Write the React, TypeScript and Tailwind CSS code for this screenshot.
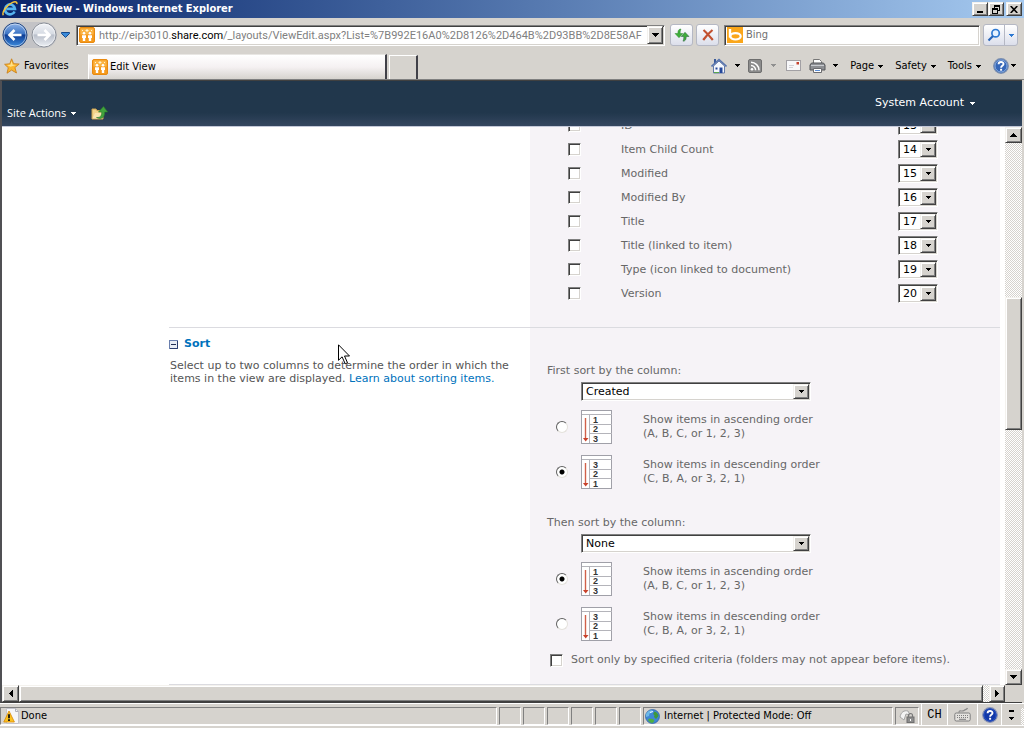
import React from "react";

const RAISED =
  "border border-t-[#f4f2ee] border-l-[#f4f2ee] border-r-[#404040] border-b-[#404040] bg-[#d6d3ce] shadow-[inset_1px_1px_0_#ffffff,inset_-1px_-1px_0_#808080]";
const SUNKEN =
  "border border-t-[#808080] border-l-[#808080] border-r-white border-b-white bg-white shadow-[inset_1px_1px_0_#404040,inset_-1px_-1px_0_#d6d3ce]";
const PANE = "border-t border-l border-t-[#808080] border-l-[#808080] border-r border-r-white border-b border-b-white";
const TRACK = "bg-[repeating-conic-gradient(#ffffff_0_25%,#d6d3ce_0_50%)] bg-[length:2px_2px]";

function Caret({ className = "" }: { className?: string }) {
  return (
    <svg viewBox="0 0 5 3" width="5" height="3" className={"shrink-0 " + className} shapeRendering="crispEdges" aria-hidden="true">
      <path d="M0 0h5v1H4v1H3v1H2V2H1V1H0z" fill="currentColor" />
    </svg>
  );
}

function BigTriangle({ dir }: { dir: "up" | "down" | "left" | "right" }) {
  const paths = {
    up: "M3 0h1v1h1v1h1v1h1v1H0V3h1V2h1V1h1z",
    down: "M0 0h7v1H6v1H5v1H4v1H3V3H2V2H1V1H0z",
    left: "M4 0v7H3V6H2V5H1V4H0V3h1V2h1V1h1V0z",
    right: "M0 0v7h1V6h1V5h1V4h1V3H3V2H2V1H1V0z",
  };
  const flat = dir === "up" || dir === "down";
  return (
    <svg width={flat ? 7 : 4} height={flat ? 4 : 7} viewBox={flat ? "0 0 7 4" : "0 0 4 7"} shapeRendering="crispEdges" aria-hidden="true">
      <path d={paths[dir]} fill="#000" />
    </svg>
  );
}

function IeLogo() {
  return (
    <svg width="16" height="16" viewBox="0 0 16 16" aria-hidden="true">
      <path d="M12.6 10.4A5 5 0 1 1 13 7.9H4.6" fill="none" stroke="#55b4f0" strokeWidth="2.6" />
      <path d="M1.4 14.2C-.6 11.6 4.6 3.8 10.6 1.4c3-1.2 4.6-.4 4.2 1.6" fill="none" stroke="#f5c33b" strokeWidth="1.5" />
    </svg>
  );
}

function SharePointIcon() {
  return (
    <svg width="16" height="16" viewBox="0 0 16 16" className="shrink-0" aria-hidden="true">
      <rect x=".5" y=".5" width="15" height="15" rx="1.5" fill="#f59a1c" stroke="#e88a10" />
      <rect x="1.5" y="1.5" width="13" height="6" fill="#fbb444" />
      <circle cx="5" cy="6.300" r="1.300" fill="#fff" />
      <circle cx="11" cy="6.300" r="1.300" fill="#fff" />
      <path d="M3 8.300h4V11H6.200v3H3.800v-3H3zM9 8.300h4V11h-.8v3H9.800v-3H9z" fill="#fff" />
      <path d="M8 2v3M6.500 3.500h3M3 3.500h1M12 3.500h1" stroke="#fff3d0" strokeWidth="1" />
    </svg>
  );
}

function NavArrow({ forward = false }: { forward?: boolean }) {
  const id = forward ? "fwd" : "back";
  return (
    <svg width="26" height="26" viewBox="0 0 26 26" aria-hidden="true">
      <defs>
        <linearGradient id={id} x1="0" y1="0" x2="0" y2="1">
          <stop offset="0" stopColor={forward ? "#f3f5f9" : "#8fb4e8"} />
          <stop offset=".45" stopColor={forward ? "#d6dbe3" : "#3c74c4"} />
          <stop offset=".5" stopColor={forward ? "#b9bfca" : "#0d3c94"} />
          <stop offset="1" stopColor={forward ? "#eef1f6" : "#3f8fe0"} />
        </linearGradient>
      </defs>
      <circle cx="13" cy="13" r="12" fill={`url(#${id})`} stroke={forward ? "#8a8f98" : "#24477f"} />
      <circle cx="13" cy="13" r="11" fill="none" stroke="#ffffff" strokeOpacity=".5" />
      <path
        d={forward ? "M6.5 13h12M13.5 8l5 5-5 5" : "M19.5 13h-12M12.5 8l-5 5 5 5"}
        fill="none"
        stroke="#fff"
        strokeWidth="2.6"
      />
    </svg>
  );
}

function StarIcon() {
  return (
    <svg width="16" height="16" viewBox="0 0 16 16" aria-hidden="true">
      <path d="M7.6.8l2 4.9 5.6.3-4.3 3.6 1.6 5.4-4.9-2.9-4.6 3.1 1.3-5.5L.6 6.3l5.2-.5z" fill="#fbb62c" stroke="#c98220" strokeWidth=".9" />
      <path d="M7.5 3l1.2 3.7 3.4.3-5.6 1.8-3.5-1.7 3.4-.4z" fill="#ffe28a" />
    </svg>
  );
}

function RefreshIcon() {
  return (
    <svg width="16" height="14" viewBox="0 0 16 14" aria-hidden="true">
      <path d="M7 1C4.500 1 3.800 3 3.900 5.500H1l4 4.200 3.800-4.200H6.200C6.100 3.500 6.300 2.300 7 1z" fill="#3fae3b" stroke="#2b8a2d" strokeWidth=".5" />
      <path d="M9 13.200c2.600 0 3.300-2 3.200-4.700H15l-4-4.200-3.800 4.200h2.600c.1 2-.1 3.300-.8 4.700z" fill="#3fae3b" stroke="#24573a" strokeWidth=".5" />
    </svg>
  );
}

function StopIcon() {
  return (
    <svg width="14" height="14" viewBox="0 0 14 14" aria-hidden="true">
      <path d="M2.500 2C5 4 8 7.500 11.800 12M11.500 2C8.500 4.500 5 8 2.200 12" fill="none" stroke="#c2502f" strokeWidth="2.200" />
    </svg>
  );
}

function BingIcon() {
  return (
    <svg width="16" height="16" viewBox="0 0 16 16" className="shrink-0" aria-hidden="true">
      <rect width="16" height="16" fill="#faa61a" />
      <path d="M3 2v8.500" stroke="#fff" strokeWidth="2.400" />
      <ellipse cx="8.500" cy="9.300" rx="5.200" ry="3.200" fill="none" stroke="#fff" strokeWidth="2.200" />
    </svg>
  );
}

function SearchIcon() {
  return (
    <svg width="14" height="14" viewBox="0 0 14 14" aria-hidden="true">
      <circle cx="8.600" cy="5.200" r="3.700" fill="#e6f2ff" stroke="#2d79d2" strokeWidth="1.700" />
      <path d="M6 8L1.500 12.500" stroke="#2563b8" strokeWidth="2.200" />
    </svg>
  );
}

function HomeIcon() {
  return (
    <svg width="16" height="16" viewBox="0 0 16 16" aria-hidden="true">
      <path d="M3 1h2v4H3z" fill="#3a5a9a" />
      <path d="M2.500 8v7h11V8L8 3z" fill="#f5f8fd" stroke="#6379a8" />
      <path d="M.5 8.500L8 1.500l7.500 7" fill="none" stroke="#5673ad" strokeWidth="1.600" />
      <path d="M8.500 9.500h3V15h-3z" fill="#24479a" />
      <path d="M4.500 9.500h2v2h-2z" fill="#24479a" />
      <path d="M3 14.500h5" stroke="#58a84a" />
    </svg>
  );
}

function RssIcon() {
  return (
    <svg width="14" height="14" viewBox="0 0 14 14" aria-hidden="true">
      <rect x=".5" y=".5" width="13" height="13" rx="1.500" fill="#8c8c8c" stroke="#6e6e6e" />
      <circle cx="4" cy="10.200" r="1.300" fill="#fff" />
      <path d="M3 6.500a4.600 4.600 0 0 1 4.600 4.800M3 3.300a8 8 0 0 1 8 8" fill="none" stroke="#fff" strokeWidth="1.500" />
    </svg>
  );
}

function MailIcon() {
  return (
    <svg width="15" height="11" viewBox="0 0 15 11" aria-hidden="true">
      <rect x=".5" y=".5" width="14" height="10" fill="#f7f7f9" stroke="#a2a0a4" />
      <path d="M10.500 2h2.500v2.500h-2.500z" fill="#c5412d" />
      <path d="M3 5.500h5M3 7.500h4" stroke="#d0d0d6" />
    </svg>
  );
}

function PrinterIcon() {
  return (
    <svg width="17" height="16" viewBox="0 0 17 16" aria-hidden="true">
      <path d="M4.500 5V1.500h6l2 2V5" fill="#fff" stroke="#777" />
      <path d="M2.500 5h12l1.500 2v5H1V7z" fill="#8d8f93" stroke="#55575b" />
      <path d="M2 7.500h13" stroke="#c9cbd0" />
      <path d="M4.500 10.500h8v4h-8z" fill="#fff" stroke="#6c6c70" />
      <path d="M6 12.500h5" stroke="#5c8fd6" />
    </svg>
  );
}

function HelpIcon({ dark = false }: { dark?: boolean }) {
  return (
    <svg width="16" height="16" viewBox="0 0 16 16" aria-hidden="true">
      <circle cx="8" cy="8" r="7.300" fill={dark ? "#1238a8" : "#3667b8"} stroke={dark ? "#8a94b4" : "#7c8faf"} strokeWidth="1.200" />
      <circle cx="8" cy="8" r="6" fill="none" stroke={dark ? "#2a55c8" : "#9cbbe6"} strokeWidth=".8" />
      <path d="M5.600 6.300c0-3 4.900-2.900 4.900-.2 0 1.700-2.400 1.800-2.400 3.600" fill="none" stroke="#fff" strokeWidth="1.900" />
      <rect x="7.100" y="10.800" width="2" height="1.900" fill="#fff" />
    </svg>
  );
}

function FolderUpIcon() {
  return (
    <svg width="17" height="16" viewBox="0 0 17 16" aria-hidden="true">
      <path d="M1 4h4l1 1.500h6V14H1z" fill="#f4d48b" stroke="#caa14e" />
      <path d="M1.500 13.500L4 8h9l-2 5.500z" fill="#fbe5b0" />
      <path d="M5.500 12.500c4 .3 5.200-1.700 5.200-5.500H7.500l5-5.500 4.200 5.500h-3c0 5.500-3 8-8.200 5.500z" fill="#41a33c" stroke="#2a7a2c" strokeWidth=".6" />
    </svg>
  );
}

function WarningPage() {
  return (
    <svg width="16" height="16" viewBox="0 0 16 16" aria-hidden="true">
      <path d="M3.500.5h9l3 3v12h-12z" fill="#f6f6f8" stroke="#c4c4cc" />
      <path d="M12.500.5v3h3" fill="none" stroke="#b0b0b8" />
      <path d="M6 3L.8 14h10.600z" fill="#fcc21f" stroke="#dd9010" strokeWidth=".9" />
      <path d="M6 6.300v4" stroke="#111" strokeWidth="1.800" />
      <path d="M5.100 11.300h1.800V13H5.100z" fill="#111" />
    </svg>
  );
}

function GlobeIcon() {
  return (
    <svg width="15" height="15" viewBox="0 0 15 15" aria-hidden="true">
      <circle cx="7.500" cy="7.500" r="7" fill="#3f86d6" stroke="#2a5e9e" strokeWidth=".7" />
      <path d="M1 5c2-3.500 4-4 6.500-3.800L6 4 4.500 4.500 4 7 1 8z" fill="#6cb9e8" />
      <path d="M9.500 2.500c2 .3 3.500 2 4 4.500l-2.500 3-2-2 .5-2-1.500-1z" fill="#3f9a3a" />
      <path d="M4 9.500l4 .5 1.500 2-2 2C5.500 14 3.500 12.500 3 11z" fill="#4eb043" />
      <path d="M5 3.500l3-1" stroke="#eefaff" strokeWidth="1.300" />
    </svg>
  );
}

function LockIcon() {
  return (
    <svg width="16" height="14" viewBox="0 0 16 14" aria-hidden="true">
      <path d="M1 8c1-5 4-7 8-6l2 4-4-1-2 6z" fill="#f3f3f3" stroke="#a5a5a5" />
      <rect x="8" y="8" width="7" height="5.500" fill="#8d8d8d" stroke="#6f6f6f" />
      <path d="M9.500 8V6.500a2 2 0 0 1 4 0V8" fill="none" stroke="#777" strokeWidth="1.200" />
      <path d="M11.500 10v2" stroke="#fff" />
    </svg>
  );
}

function KeyboardIcon() {
  return (
    <svg width="17" height="15" viewBox="0 0 17 15" aria-hidden="true">
      <path d="M5 5.500c0-3 3-.5 5-2s3-1 3.500-2.500" fill="none" stroke="#8a8a8a" strokeWidth="1.200" />
      <rect x=".8" y="6" width="15.400" height="8" rx="1.500" fill="#e4e2de" stroke="#7e7e7e" />
      <path d="M3 8.500h11M3 10.500h11" stroke="#7e7e7e" strokeDasharray="1 1" />
      <path d="M5 12.300h7" stroke="#7e7e7e" />
    </svg>
  );
}

function SortGlyph({ digits }: { digits: string[] }) {
  return (
    <svg width="32" height="34" viewBox="0 0 32 34" className="shrink-0" aria-hidden="true">
      <rect x=".5" y=".5" width="30" height="33" fill="#fff" stroke="#a0a0a8" />
      <path d="M1 4.500h30M8.500 5v28M9 14.500h22M9 23.500h22" stroke="#b4b4ba" fill="none" />
      <path d="M4.500 8v22" stroke="#d0604a" strokeWidth="1.400" />
      <path d="M2 28h5.500L4.700 31.500z" fill="#c8402a" />
      {digits.map((d, i) => (
        <text key={i} x="12" y={[13, 22, 32][i]} className="font-['Liberation_Sans',sans-serif] text-[9px] font-bold" fill="#333">
          {d}
        </text>
      ))}
    </svg>
  );
}

function ClassicSelect({ label, value, options, className }: { label: string; value: string; options: string[]; className: string }) {
  return (
    <span className={"relative flex h-[19px] " + SUNKEN + " " + className}>
      <select aria-label={label} defaultValue={value} className="w-full appearance-none bg-transparent pl-1 text-[11px] leading-[17px] text-black outline-none">
        {options.map((o) => (
          <option key={o}>{o}</option>
        ))}
      </select>
      <span className={"pointer-events-none absolute top-px right-px bottom-px flex w-4 items-center justify-center text-black " + RAISED}>
        <Caret />
      </span>
    </span>
  );
}

const CHECKBOX = "size-[13px] shrink-0 appearance-none rounded-none " + SUNKEN;
const RADIO =
  "size-3 shrink-0 appearance-none rounded-full border border-t-[#606060] border-l-[#606060] border-r-[#e4e1dc] border-b-[#e4e1dc] bg-white checked:bg-[radial-gradient(circle,#000_0_2px,#fff_3px)]";

const fields = [
  { name: "ID", pos: "13" },
  { name: "Item Child Count", pos: "14" },
  { name: "Modified", pos: "15" },
  { name: "Modified By", pos: "16" },
  { name: "Title", pos: "17" },
  { name: "Title (linked to item)", pos: "18" },
  { name: "Type (icon linked to document)", pos: "19" },
  { name: "Version", pos: "20" },
];
const positions = Array.from({ length: 20 }, (_, i) => String(i + 1));

function SortOption({ group, descending, checked }: { group: string; descending: boolean; checked: boolean }) {
  const digits = descending ? ["3", "2", "1"] : ["1", "2", "3"];
  return (
    <label className="flex items-center">
      <input type="radio" name={group} defaultChecked={checked} className={RADIO} />
      <span className="ml-[13px] flex">
        <SortGlyph digits={digits} />
      </span>
      <span className="ml-[30px] leading-[14px]">
        Show items in {descending ? "descending" : "ascending"} order
        <br />
        {descending ? "(C, B, A, or 3, 2, 1)" : "(A, B, C, or 1, 2, 3)"}
      </span>
    </label>
  );
}

function SortBlock({ title, value, group, descending }: { title: string; value: string; group: string; descending: boolean }) {
  return (
    <fieldset>
      <legend className="leading-[14px]">{title}</legend>
      <ClassicSelect label={title} value={value} options={["None", "Created", "Modified", "Title"]} className="mt-1 ml-[34px] w-[230px]" />
      <div className="mt-[9px] ml-[9px] flex flex-col gap-[11px]">
        <SortOption group={group} descending={false} checked={!descending} />
        <SortOption group={group} descending={true} checked={descending} />
      </div>
    </fieldset>
  );
}

function TitleBar() {
  return (
    <div className="flex h-[18px] items-center bg-linear-to-r from-[#0a246a] to-[#a6caf0] pr-[2px] pl-[2px]">
      <IeLogo />
      <h1 className="ml-[2px] flex-1 text-[11px] leading-[18px] font-bold whitespace-nowrap text-white">Edit View - Windows Internet Explorer</h1>
      <button aria-label="Minimize" className={"flex h-[14px] w-4 items-center justify-center " + RAISED}>
        <svg width="9" height="8" viewBox="0 0 9 8" shapeRendering="crispEdges">
          <path d="M1 6h6v2H1z" />
        </svg>
      </button>
      <button aria-label="Restore" className={"flex h-[14px] w-4 items-center justify-center " + RAISED}>
        <svg width="9" height="9" viewBox="0 0 9 9" shapeRendering="crispEdges">
          <path d="M2 0h6v6H6V5h1V2H3v1H2zM0 3h6v6H0zM1 5v3h4V5z" fillRule="evenodd" />
        </svg>
      </button>
      <button aria-label="Close" className={"ml-[2px] flex h-[14px] w-4 items-center justify-center " + RAISED}>
        <svg width="8" height="7" viewBox="0 0 8 7">
          <path d="M.7 0l6.600 7M7.300 0L.7 7" stroke="#000" strokeWidth="1.600" />
        </svg>
      </button>
    </div>
  );
}

const TOOL_BUTTON = "flex h-[22px] items-center justify-center rounded-[3px] border border-[#b5b8c4] bg-linear-to-b from-white to-[#dcdfeb]";

function AddressBar() {
  return (
    <div className="flex h-[34px] items-center pr-[6px] pl-[2px]">
      <div className="flex w-[55px] shrink-0 items-center justify-between rounded-full bg-[#c3c3c6]">
        <button aria-label="Back" className="flex"><NavArrow /></button>
        <button aria-label="Forward" className="flex"><NavArrow forward /></button>
      </div>
      <button aria-label="Recent pages" className="mr-[6px] ml-1 flex shrink-0">
        <svg width="9" height="6" viewBox="0 0 9 6">
          <path d="M.5.500h8v1L4.500 5.500.5 1.500z" fill="#3a8ad8" stroke="#174a8c" />
        </svg>
      </button>
      <div className={"flex h-[21px] min-w-0 flex-1 items-center pr-px pl-[2px] " + SUNKEN}>
        <SharePointIcon />
        <div className="relative ml-1 min-w-0 flex-1 overflow-hidden pt-px font-['Roboto',sans-serif] text-[11px] leading-4 whitespace-nowrap text-[#808080]">
          <span aria-hidden="true">
            http://eip3010.<span className="text-black">share.com</span>/_layouts/ViewEdit.aspx?List=%7B992E16A0%2D8126%2D464B%2D93BB%2D8E58AF
          </span>
          <input aria-label="Address" className="absolute inset-0 w-full bg-transparent text-transparent outline-none" />
        </div>
        <button aria-label="Show addresses" className={"flex h-[18px] w-4 shrink-0 items-center justify-center " + RAISED}>
          <BigTriangle dir="down" />
        </button>
      </div>
      <button aria-label="Refresh" className={"ml-[5px] w-[23px] " + TOOL_BUTTON}><RefreshIcon /></button>
      <button aria-label="Stop" className={"mr-[5px] ml-[3px] w-[23px] " + TOOL_BUTTON}><StopIcon /></button>
      <div className={"flex h-[21px] w-[256px] shrink-0 items-center pl-[2px] " + SUNKEN}>
        <BingIcon />
        <input aria-label="Search" defaultValue="Bing" className="ml-[3px] min-w-0 flex-1 pt-px text-[11px] text-[#707070] outline-none" />
      </div>
      <div className={"ml-[3px] w-[35px] shrink-0 " + TOOL_BUTTON}>
        <button aria-label="Search the web" className="flex h-full w-[21px] items-center justify-center border-r border-[#b5b8c4]"><SearchIcon /></button>
        <button aria-label="Search options" className="flex flex-1 justify-center text-[#2d79d2]"><Caret /></button>
      </div>
    </div>
  );
}

function TabRow() {
  return (
    <div className="flex h-7 items-end justify-between border-b border-[#808080]">
      <button className="flex h-[27px] w-[88px] shrink-0 items-center pl-1 text-[11px]">
        <StarIcon />
        <span className="ml-1 pt-px">Favorites</span>
      </button>
      <button className="flex h-[25px] w-[299px] items-center border-t border-r-2 border-l border-t-[#e8e6e3] border-r-[#404048] border-l-white bg-linear-to-b from-white via-[#f5f1f2] to-[#d6d3ce] pl-[3px] text-[11px]">
        <SharePointIcon />
        <span className="ml-[2px] pt-px">Edit View</span>
      </button>
      <button aria-label="New tab" className="ml-[2px] h-6 w-[29px] border-t border-r-2 border-l border-t-white border-r-[#404048] border-l-white" />
      <div className="ml-auto flex h-[27px] items-center pr-[8px] text-[11px] whitespace-nowrap">
        <button aria-label="Home" className="flex items-center gap-2"><HomeIcon /><Caret /></button>
        <button aria-label="Feeds" className="ml-2 flex items-center gap-[9px] text-[#909090]"><RssIcon /><Caret /></button>
        <button aria-label="Read mail" className="ml-[10px] flex"><MailIcon /></button>
        <button aria-label="Print" className="ml-2 flex items-center gap-[7px]"><PrinterIcon /><Caret /></button>
        <button className="ml-3 flex items-center gap-1 pt-px">Page<Caret /></button>
        <button className="ml-3 flex items-center gap-1 pt-px">Safety<Caret /></button>
        <button className="ml-3 flex items-center gap-1 pt-px">Tools<Caret /></button>
        <button aria-label="Help" className="ml-3 flex items-center gap-[2px]"><HelpIcon /><Caret /></button>
      </div>
    </div>
  );
}

function RibbonHeader() {
  return (
    <header className="flex h-[46px] items-start justify-between border-b border-[#c3c8d8] bg-linear-to-b from-[#21374c] from-70% to-[#34465f] pr-[47px] pl-[5px] text-white">
      <div className="mt-6 flex items-center font-['Open_Sans',sans-serif] text-[11px] leading-4">
        <button className="flex items-center gap-[5px]">Site Actions<Caret /></button>
        <button aria-label="Navigate up" className="ml-[15px] flex"><FolderUpIcon /></button>
      </div>
      <button className="mt-[14px] flex items-center gap-[6px] font-['DejaVu_Sans',sans-serif] text-[11px] leading-4">
        System Account<Caret />
      </button>
    </header>
  );
}

function Document() {
  return (
    <main className="min-h-0 min-w-0 flex-1 overflow-hidden bg-white pr-[5px] pl-[167px] font-['DejaVu_Sans',sans-serif] text-[11px] text-[#676767]">
      <section className="flex border-b border-[#dbdbe0]">
        <div className="w-[361px] shrink-0" />
        <div className="min-w-0 flex-1 bg-[#f6f3f7] pb-[22px]">
          <table className="-mt-[14px] border-collapse">
            <tbody>
              {fields.map((f) => (
                <tr key={f.name} className="h-6">
                  <td className="w-[91px] p-0 pl-[38px]">
                    <input type="checkbox" id={"show-" + f.pos} className={"block " + CHECKBOX} />
                  </td>
                  <td className="w-[277px] p-0 pt-[3px]">
                    <label htmlFor={"show-" + f.pos}>{f.name}</label>
                  </td>
                  <td className="p-0">
                    <ClassicSelect label={"Position of " + f.name} value={f.pos} options={positions} className="w-10" />
                  </td>
                </tr>
              ))}
            </tbody>
          </table>
        </div>
      </section>
      <section className="flex border-b border-[#dbdbe0]">
        <div className="w-[361px] shrink-0 pt-[9px]">
          <h2 className="flex items-center text-[11px] leading-[14px] font-bold text-[#0072bc]">
            <svg width="9" height="9" viewBox="0 0 9 9" className="mr-[6px]" aria-hidden="true">
              <rect x=".5" y=".5" width="8" height="8" fill="#e9edf5" stroke="#6a7fae" />
              <path d="M8.500 1v7.500H1" fill="none" stroke="#2b3d6e" />
              <path d="M2 4.500h5" stroke="#222f55" />
            </svg>
            Sort
          </h2>
          <p className="mt-2 pl-px leading-[13px] text-[#555]">
            Select up to two columns to determine the order in which the items in the view are displayed.{" "}
            <a href="#sorting" className="text-[#0072bc]">Learn about sorting items.</a>
          </p>
        </div>
        <div className="min-w-0 flex-1 bg-[#f6f3f7] pt-9 pb-[17px] pl-[17px]">
          <SortBlock title="First sort by the column:" value="Created" group="first" descending={true} />
          <div className="mt-[27px]">
            <SortBlock title="Then sort by the column:" value="None" group="then" descending={false} />
          </div>
          <label className="mt-3 ml-[3px] flex items-center leading-[14px] whitespace-nowrap">
            <input type="checkbox" className={CHECKBOX} />
            <span className="ml-2">Sort only by specified criteria (folders may not appear before items).</span>
          </label>
        </div>
      </section>
    </main>
  );
}

const SCROLL_BUTTON = "flex shrink-0 items-center justify-center " + RAISED;

function VerticalScroll() {
  return (
    <div className="flex w-[17px] shrink-0 flex-col">
      <button aria-label="Scroll up" className={"h-4 " + SCROLL_BUTTON}><BigTriangle dir="up" /></button>
      <div className={"grow-[154] " + TRACK} />
      <div className={"h-[133px] " + RAISED} />
      <div className={"grow-[240] " + TRACK} />
      <button aria-label="Scroll down" className={"h-4 " + SCROLL_BUTTON}><BigTriangle dir="down" /></button>
    </div>
  );
}

function HorizontalScroll() {
  return (
    <div className="flex h-[17px] shrink-0 bg-[#d6d3ce] pr-[17px]">
      <button aria-label="Scroll left" className={"w-[17px] " + SCROLL_BUTTON}><BigTriangle dir="left" /></button>
      <div className={"flex-1 " + RAISED} />
      <div className={"w-[6px] " + TRACK} />
      <button aria-label="Scroll right" className={"w-4 " + SCROLL_BUTTON}><BigTriangle dir="right" /></button>
    </div>
  );
}

function StatusBar() {
  return (
    <footer className="shrink-0 border-t border-white bg-[#d6d3ce]">
      <div className="flex h-[21px] items-end gap-[2px] text-[11px] whitespace-nowrap">
        <div className={"flex h-[18px] flex-1 items-center pl-[2px] " + PANE}>
          <WarningPage />
          <span className="ml-[2px]">Done</span>
        </div>
        {[0, 1, 2, 3, 4, 5].map((i) => (
          <div key={i} className={"h-[18px] w-[22px] " + PANE} />
        ))}
        <div className={"flex h-[18px] w-[250px] items-center pl-px " + PANE}>
          <GlobeIcon />
          <span className="ml-1">Internet | Protected Mode: Off</span>
        </div>
        <div className={"flex h-[18px] w-6 items-center justify-center " + PANE}><LockIcon /></div>
        <div className="flex h-[21px] w-[103px] items-stretch border-l border-white">
          <button className="w-[26px] border-r border-white font-['Liberation_Mono',monospace] text-[12px]">CH</button>
          <button aria-label="Keyboard" className="flex w-[30px] items-center justify-center border-r border-white"><KeyboardIcon /></button>
          <button aria-label="Language bar help" className="flex w-6 items-center justify-center border-r border-white"><HelpIcon dark /></button>
          <button aria-label="Language bar options" className="flex flex-1 flex-col items-center justify-center gap-[5px]">
            <svg width="5" height="2" viewBox="0 0 5 2"><path d="M0 0h5v2H0z" /></svg>
            <Caret />
          </button>
          <div className={"mt-1 w-[3px] " + TRACK} />
        </div>
      </div>
      <div className="h-[3px] border-t border-white" />
    </footer>
  );
}

function Pointer() {
  return (
    <svg width="13" height="21" viewBox="0 0 13 21" className="pointer-events-none absolute top-[344px] left-[338px]" aria-hidden="true">
      <path d="M.5.800v15.500l3.600-3.500 3.100 7 2.300-1-3-6.800h5z" fill="#fff" stroke="#000" />
    </svg>
  );
}

export default function App() {
  return (
    <div className="relative h-screen bg-white pr-2 pb-1 font-['DejaVu_Sans_Condensed','DejaVu_Sans',sans-serif] text-black">
      <div className="flex h-full flex-col bg-[#d6d3ce]">
        <TitleBar />
        <AddressBar />
        <TabRow />
        <div className="mr-[2px] flex min-h-0 flex-1 flex-col border-t border-b border-l-2 border-t-[#404040] border-b-[#404040] border-l-[#505054]">
          <RibbonHeader />
          <div className="flex min-h-0 flex-1">
            <Document />
            <VerticalScroll />
          </div>
          <HorizontalScroll />
        </div>
        <StatusBar />
      </div>
      <Pointer />
    </div>
  );
}
